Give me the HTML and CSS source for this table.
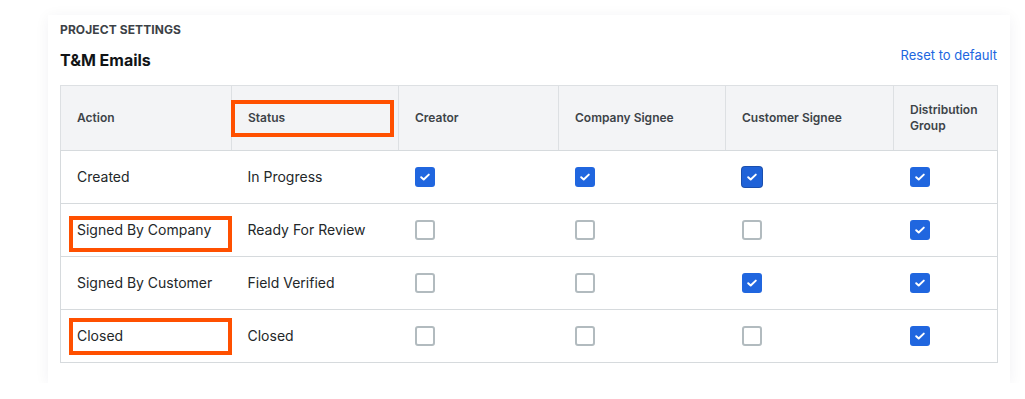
FILE: index.html
```html
<!DOCTYPE html>
<html lang="en">
<head>
<meta charset="utf-8">
<title>T&amp;M Emails</title>
<link rel="stylesheet" href="styles.css">
</head>
<body>
<div class="page">
  <section class="card">
    <div class="eyebrow">PROJECT SETTINGS</div>
    <div class="title-row">
      <h2 class="title">T&amp;M Emails</h2>
      <a class="reset" href="#">Reset to default</a>
    </div>
    <table class="grid">
      <colgroup>
        <col class="c-action"><col class="c-status"><col class="c-creator"><col class="c-company"><col class="c-customer"><col class="c-dist">
      </colgroup>
      <thead>
        <tr>
          <th>Action</th>
          <th class="mark-cell">Status<span class="highlight hl-head"></span></th>
          <th>Creator</th>
          <th>Company Signee</th>
          <th>Customer Signee</th>
          <th>Distribution Group</th>
        </tr>
      </thead>
      <tbody>
        <tr>
          <td>Created</td>
          <td>In Progress</td>
          <td><span class="cb on"><svg viewBox="0 0 20 20"><path d="M6.2 10.2 L8.7 12.5 L13.8 7.6"/></svg></span></td>
          <td><span class="cb on"><svg viewBox="0 0 20 20"><path d="M6.2 10.2 L8.7 12.5 L13.8 7.6"/></svg></span></td>
          <td><span class="cb on focus"><svg viewBox="0 0 20 20"><path d="M6.2 10.2 L8.7 12.5 L13.8 7.6"/></svg></span></td>
          <td><span class="cb on"><svg viewBox="0 0 20 20"><path d="M6.2 10.2 L8.7 12.5 L13.8 7.6"/></svg></span></td>
        </tr>
        <tr>
          <td class="mark-cell">Signed By Company<span class="highlight hl-row hl-company"></span></td>
          <td>Ready For Review</td>
          <td><span class="cb"></span></td>
          <td><span class="cb"></span></td>
          <td><span class="cb"></span></td>
          <td><span class="cb on"><svg viewBox="0 0 20 20"><path d="M6.2 10.2 L8.7 12.5 L13.8 7.6"/></svg></span></td>
        </tr>
        <tr>
          <td>Signed By Customer</td>
          <td>Field Verified</td>
          <td><span class="cb"></span></td>
          <td><span class="cb"></span></td>
          <td><span class="cb on"><svg viewBox="0 0 20 20"><path d="M6.2 10.2 L8.7 12.5 L13.8 7.6"/></svg></span></td>
          <td><span class="cb on"><svg viewBox="0 0 20 20"><path d="M6.2 10.2 L8.7 12.5 L13.8 7.6"/></svg></span></td>
        </tr>
        <tr>
          <td class="mark-cell">Closed<span class="highlight hl-row hl-closed"></span></td>
          <td>Closed</td>
          <td><span class="cb"></span></td>
          <td><span class="cb"></span></td>
          <td><span class="cb"></span></td>
          <td><span class="cb on"><svg viewBox="0 0 20 20"><path d="M6.2 10.2 L8.7 12.5 L13.8 7.6"/></svg></span></td>
        </tr>
      </tbody>
    </table>
  </section>
</div>
</body>
</html>
```

FILE: styles.css
```css
* { box-sizing: border-box; }

html, body {
  margin: 0;
  padding: 0;
  background: #ffffff;
}

body {
  font-family: Inter, "Noto Sans", "Liberation Sans", sans-serif;
  color: #232729;
}

.page {
  padding: 15px 0 0 48px;
}

.card {
  width: 962px;
  background: #ffffff;
  padding: 7px 13px 20px 12px;
  box-shadow: 0 2px 14px rgba(30, 40, 60, 0.06);
}

.eyebrow {
  font-size: 12px;
  line-height: 16px;
  font-weight: 700;
  color: #3c4146;
  letter-spacing: 0.1px;
}

.title-row {
  display: flex;
  justify-content: space-between;
  align-items: flex-start;
  margin-top: 8px;
  height: 26px;
}

.title {
  margin: 2px 0 0;
  font-size: 16px;
  line-height: 24px;
  font-weight: 700;
  color: #111416;
}

.reset {
  font-size: 13px;
  line-height: 18px;
  color: #2066df;
  text-decoration: none;
}

.grid {
  margin-top: 13px;
  width: 937px;
  table-layout: fixed;
  border-collapse: collapse;
  border: 1px solid #d6dadd;
}

.c-action { width: 171px; }
.c-status { width: 167px; }
.c-creator { width: 160px; }
.c-company { width: 167px; }
.c-customer { width: 168px; }
.c-dist { width: 104px; }

.grid th {
  height: 65px;
  background: #f3f4f6;
  border: 1px solid #dde0e3;
  border-bottom-color: #d6dadd;
  text-align: left;
  vertical-align: middle;
  padding: 0 16px;
  font-size: 12px;
  line-height: 16px;
  font-weight: 600;
  color: #3d4348;
}

.grid td {
  height: 53px;
  border-top: 1px solid #d6dadd;
  padding: 0 16px;
  vertical-align: middle;
  font-size: 14px;
  line-height: 20px;
  color: #232729;
}

.mark-cell {
  position: relative;
}

.highlight {
  position: absolute;
  border: 4.5px solid #ff5000;
  pointer-events: none;
}

.hl-head {
  left: -1px;
  top: 14px;
  width: 163px;
  height: 37px;
}

.hl-row {
  left: 8px;
  width: 163px;
}

.hl-company {
  top: 12px;
  height: 36px;
}

.hl-closed {
  top: 8px;
  height: 37px;
}

.cb {
  display: block;
  width: 20px;
  height: 20px;
  border: 2px solid #b2bbbf;
  border-radius: 3px;
  background: #ffffff;
}

.cb.on {
  border: none;
  background: #2066df;
}

.cb.focus {
  box-shadow: 0 0 0 1px #1a4fae;
  background: #1f62d8;
}

.cb svg {
  display: block;
  width: 20px;
  height: 20px;
}

.cb svg path {
  fill: none;
  stroke: #ffffff;
  stroke-width: 2;
  stroke-linecap: round;
  stroke-linejoin: round;
}
```
